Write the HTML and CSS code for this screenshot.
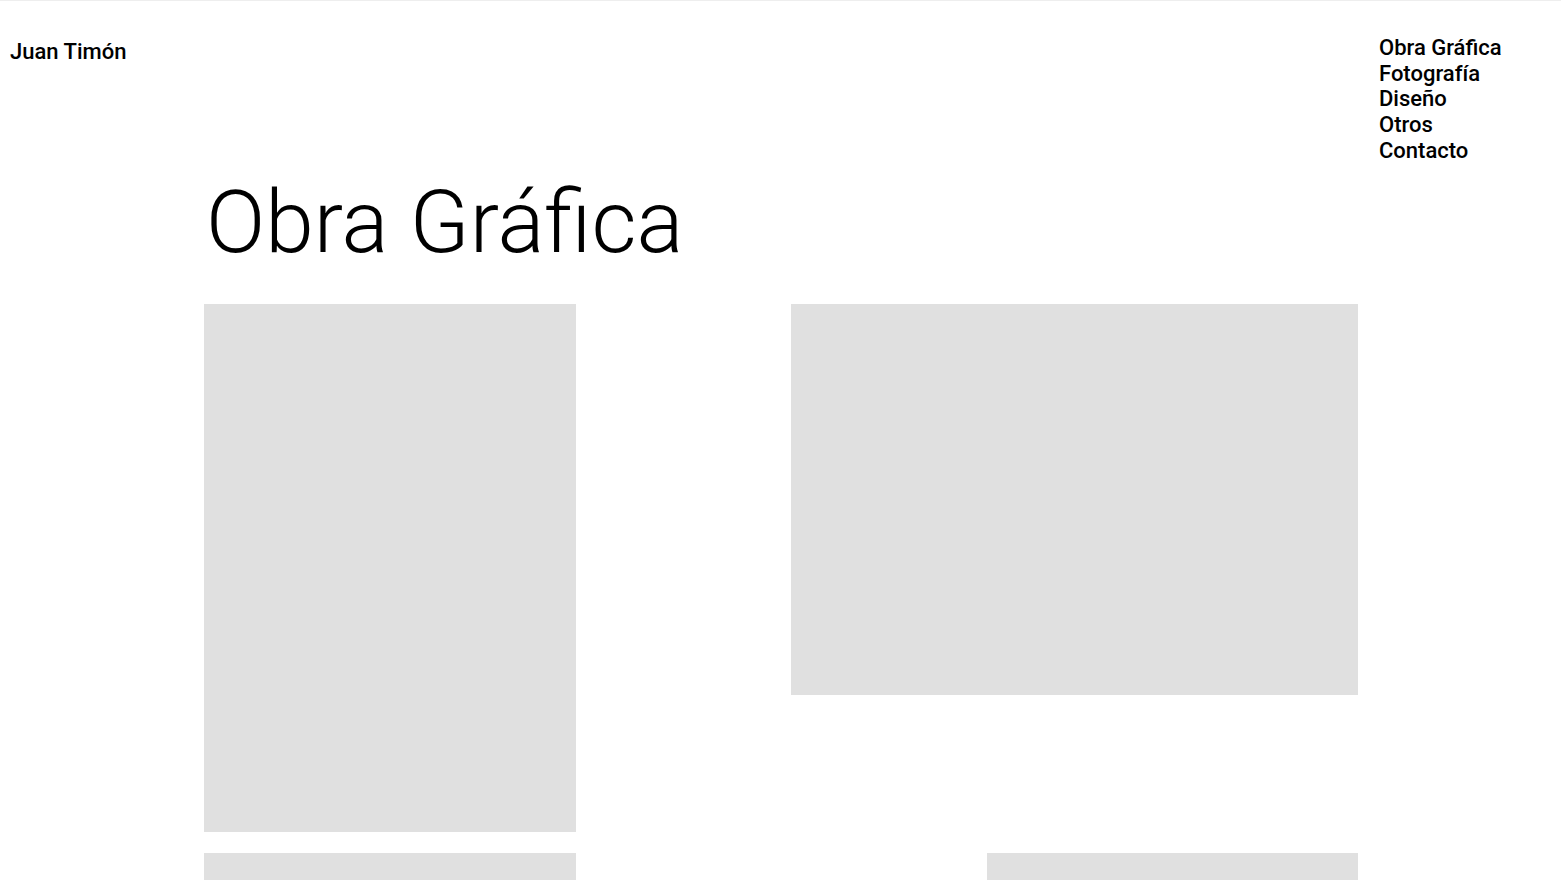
FILE: index.html
```html
<!DOCTYPE html>
<html lang="es">
<head>
<meta charset="utf-8">
<title>Juan Timón — Obra Gráfica</title>
<link rel="stylesheet" href="styles.css">
</head>
<body>
<header class="site-header">
  <a class="logo" href="#">Juan Timón</a>
  <nav class="menu">
    <a href="#">Obra Gráfica</a>
    <a href="#">Fotografía</a>
    <a href="#">Diseño</a>
    <a href="#">Otros</a>
    <a href="#">Contacto</a>
  </nav>
</header>
<main class="content">
  <h1 class="page-title">Obra Gráfica</h1>
  <section class="gallery">
    <div class="row">
      <div class="work work-tall"></div>
      <div class="work work-wide"></div>
    </div>
    <div class="row">
      <div class="work work-tall"></div>
      <div class="work work-tall work-narrow"></div>
    </div>
  </section>
</main>
</body>
</html>
```
FILE: styles.css
```css
html, body {
  margin: 0;
  padding: 0;
  background: #fff;
  color: #000;
  font-family: Roboto, "Liberation Sans", sans-serif;
}
body {
  border-top: 1px solid #eeeeee;
}
a {
  color: #000;
  text-decoration: none;
}
.site-header {
  display: flex;
  justify-content: space-between;
  align-items: flex-start;
  padding-left: 10px;
  height: 163px;
}
.logo {
  margin-top: 38px;
  font-size: 22px;
  line-height: 25.6px;
  font-weight: 500;
}
.menu {
  width: 182px;
  margin-top: 34px;
  display: flex;
  flex-direction: column;
  font-size: 22px;
  line-height: 25.7px;
  font-weight: 500;
}
.content {
  padding-left: 204px;
  width: 1154px;
}
.page-title {
  margin: 14px 0 38px 0;
  padding-left: 2px;
  font-size: 87.5px;
  line-height: 88px;
  font-weight: 300;
}
.gallery {
  display: flex;
  flex-direction: column;
  gap: 21px;
}
.row {
  display: flex;
  justify-content: space-between;
  align-items: flex-start;
}
.work {
  background: #e0e0e0;
}
.work-tall {
  width: 372px;
  height: 528px;
}
.work-narrow {
  width: 371px;
}
.work-wide {
  width: 567px;
  height: 391px;
}
```
